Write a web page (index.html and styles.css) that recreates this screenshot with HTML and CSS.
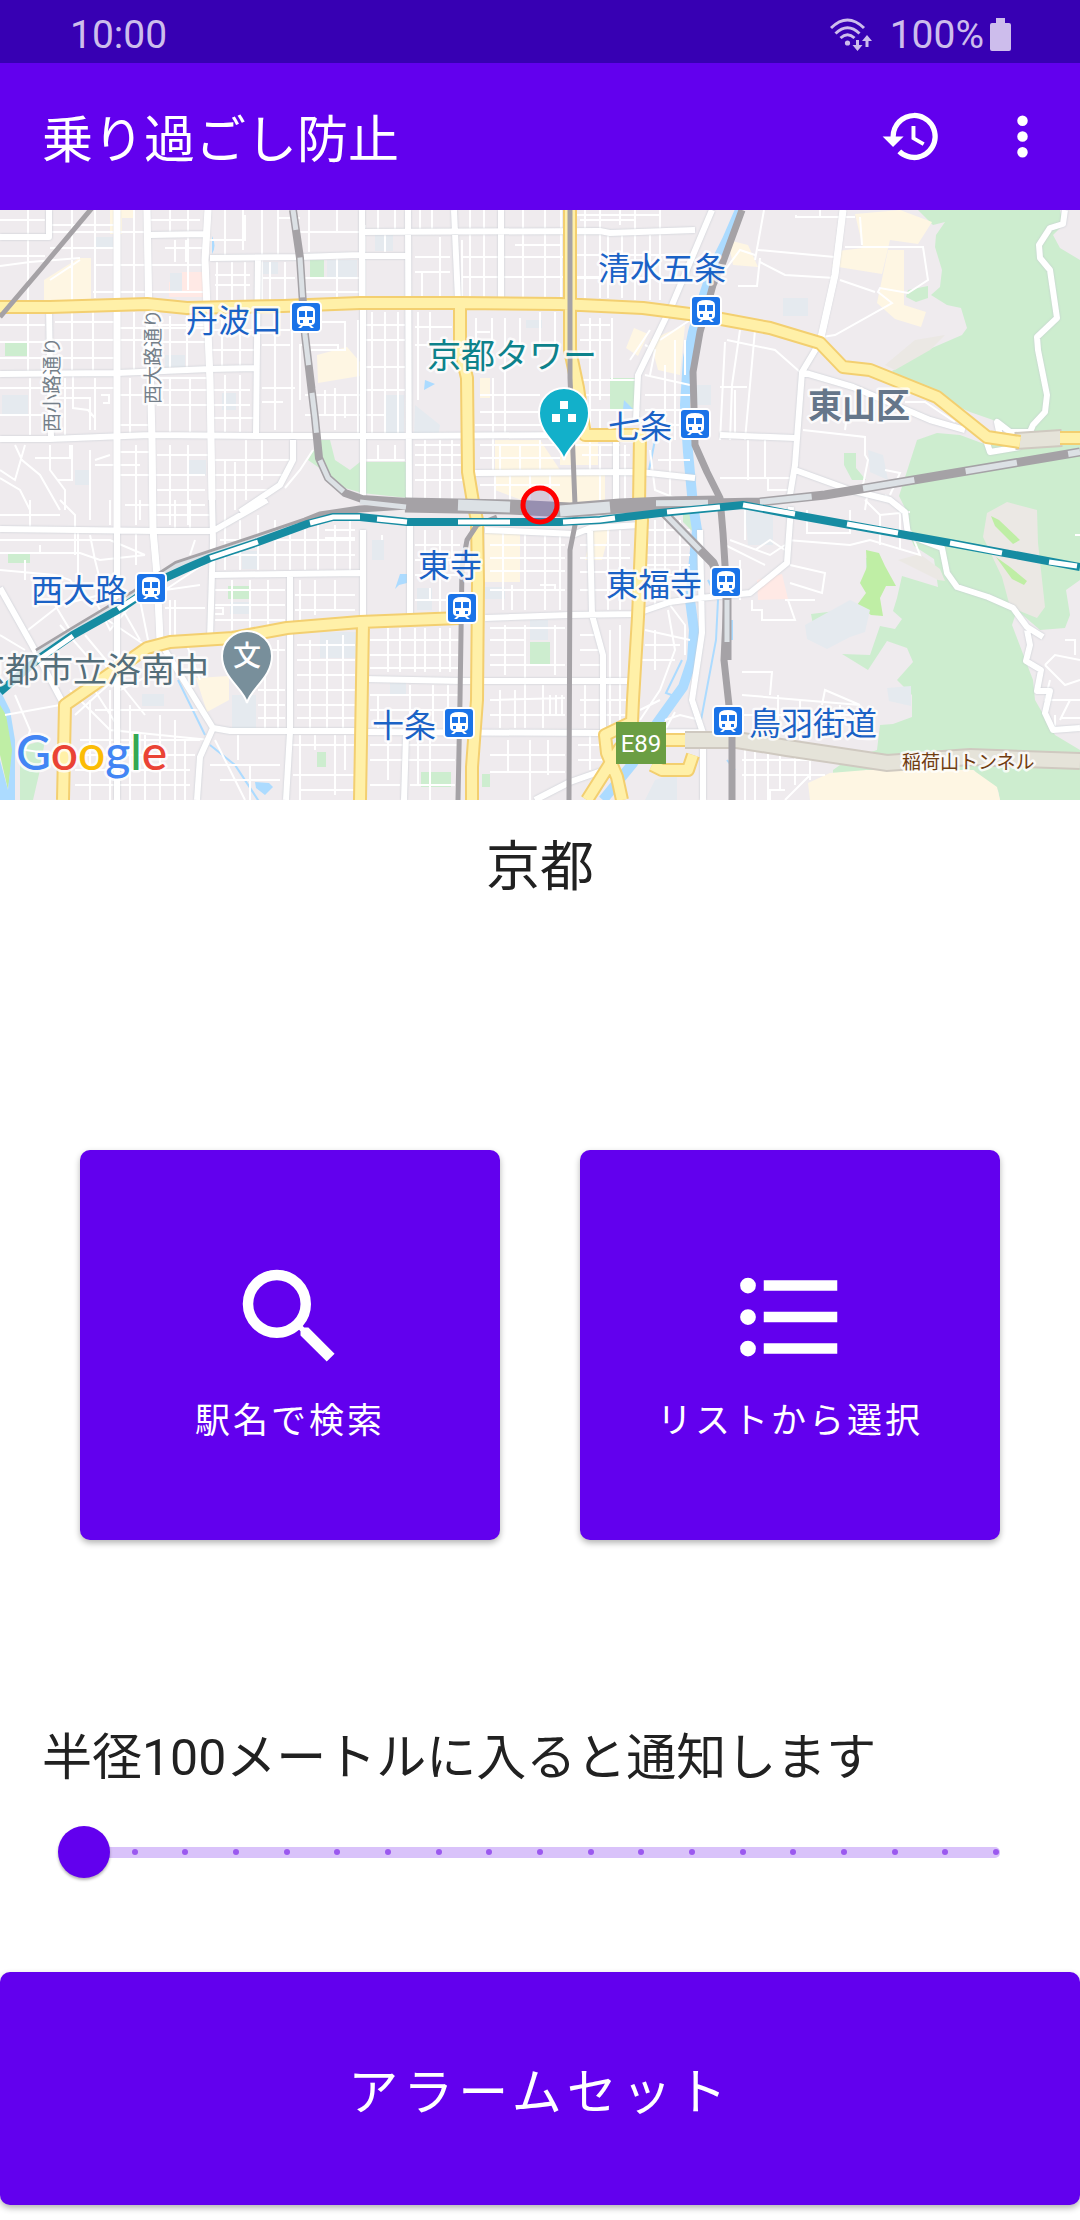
FILE: index.html
```html
<!DOCTYPE html>
<html lang="ja">
<head>
<meta charset="utf-8">
<meta name="viewport" content="width=device-width, initial-scale=1">
<title>乗り過ごし防止</title>
<link rel="stylesheet" href="styles.css">
</head>
<body>
<div class="status-bar">
  <span>10:00</span>
  <div class="status-right">
    <svg class="wifi" viewBox="0 0 42 34" aria-hidden="true">
      <g fill="none" stroke="currentColor" stroke-width="3">
        <path d="M1 10Q17.500 -6 34 10"/>
        <path d="M5.500 15.500Q17.500 4 29.500 15.500"/>
        <path d="M10.500 20Q17.500 13.500 24.500 20"/>
        <path d="M27.500 22V30M37 20V29"/>
      </g>
      <circle cx="17.500" cy="25" r="2.600" fill="currentColor"/>
      <path fill="currentColor" d="M22.500 27h10l-5 6zM32 23h10l-5-6z"/>
    </svg>
    <span>100%</span>
    <svg class="battery" viewBox="0 0 21 33" aria-hidden="true"><path fill="currentColor" d="M6 0h9v5h4a2 2 0 0 1 2 2v24a2 2 0 0 1-2 2H2a2 2 0 0 1-2-2V7a2 2 0 0 1 2-2h4z"/></svg>
  </div>
</div>

<header class="app-bar">
  <h1>乗り過ごし防止</h1>
  <button class="icon-button" type="button" aria-label="履歴">
    <svg viewBox="0 0 24 24"><path fill="currentColor" d="M13 3a9 9 0 0 0-9 9H1l3.890 3.890.070.140L9 12H6a7 7 0 1 1 2.060 4.940l-1.420 1.420A9 9 0 1 0 13 3zm-1 5v5l4.280 2.540.720-1.210-3.500-2.080V8z"/></svg>
  </button>
  <button class="icon-button" type="button" aria-label="その他">
    <svg viewBox="0 0 24 24"><path fill="currentColor" d="M12 8a2 2 0 1 0 0-4 2 2 0 0 0 0 4zm0 2a2 2 0 1 0 0 4 2 2 0 0 0 0-4zm0 6a2 2 0 1 0 0 4 2 2 0 0 0 0-4z"/></svg>
  </button>
</header>

<svg class="map" viewBox="0 210 1080 590" preserveAspectRatio="xMidYMid slice" role="img" aria-label="京都駅周辺の地図">
  <defs>
    <g id="station">
      <rect x="-15" y="-15" width="30" height="30" rx="4" fill="#1a73e8" stroke="#fff" stroke-width="2"/>
      <path fill="#fff" d="M-9 -6q0-5 9-5t9 5V4q0 4-4 4l3 3H5L3 9h-6l-2 2h-3l3-3q-4 0-4-4z"/>
      <path fill="#1a73e8" d="M-7-6h6v6h-6zM1-6h6v6H1zM-6 3h3v3h-3zM3 3h3v3H3z"/>
    </g>
    <path id="pin" d="M0 47C-3 33-25 22-25 0a25 25 0 0 1 50 0C25 22 3 33 0 47z"/>
  </defs>
  <rect y="210" width="1080" height="590" fill="#efebee"/>

  <!-- parks and hills -->
  <g fill="#cdedcf">
    <path d="M918 210l15 15 12-3-9 13-1 12 7 23-2 17-9 8 16 10 14 3 6 20-5 7-30 13-40 23 15 16 26 8 37 17 23 8 17 12h70V260l-20-12-7-13 10-10-3-15z"/>
    <path d="M917 440l20-7 23 2 27 10h93v135l-14 10 4 25-5 13-25 2-23-20-5 15 21 55 2 20 20 35 25 15v50h-80l-2-10-13-5-11-15H865l-10 15-22-2v-13l14-10 30-10 3-25 13-1 19-7v-22l-15-15 16-18-6-14-20-7-19 29-26-16 28 1 10-29 15 3 7-10-9-8 4-13 5-22 36 11-4-28-20-13-7-18 2-12-10-20z"/>
    <path d="M5 342h22v14H5zM310 260h14v18h-14zM610 378h27v33h-27zM530 642h20v24h-20zM421 772h30v15h-30zM482 774h8v13h-8zM8 554h22v9H8zM228 586h21v13h-21zM317 752h9v15h-9zM844 453h12v15l10 12h-14l-8-15z"/>
    <path d="M320 440h10l5 20 15 10 10-8h47v36l-45-5-17-5-20-16-17-12zM20 747l25-7-5 30-7 30H20zM908 290l20-4v12l-12 4-10-5zM811 614l25-3 9 8v7l-18-3-14 2zM866 558l12-4 6 20-18 4z"/>
    <path d="M683 512h10v20l-10-10z"/>
  </g>
  <g fill="#ebe8e4">
    <path d="M987 513l20-11 30 8 1 33 7 64-8 11-27-11-8-30-19-40zM895 370l35-20 15-15-30 5-30 25zM898 560l40 20 7 1-5-12-20-15z"/>
  </g>
  <path fill="#bfeea5" d="M866 550l13 3 6 13 11 20-10 0-6 12 3 18-12-1-14-10 9-12-6-10 7-16zM991 516l8 4 21 20-7 4-18-18zM996 557l14 10 17 14-3 4-12-6zM0 700l8 20 5 30-5 40-8-35z"/>
  <g fill="#fef6e3">
    <path d="M808 783l22-10 37-3h106l24 17 3 13H810zM110 210h24v8h-12v16h-12zM44 280l35-22h12v42H44zM855 214l45-4 32 12-14 22-28-4-8 34-50-8 6-15 25-3zM888 250h16v55l22 7-5 15-26-8-18-16zM317 355l30-8 13 15v14l-42 7zM495 440h45l20 30h45v35h-70l-40-15zM485 530h35v52h-35zM560 440h38v25h-38zM592 530h18l-8 30h-17zM634 328l14 6-10 22-12-8zM650 340l35-15-5 50-22-5zM480 378h10v20h-10zM196 678l33-2v24l-22 12zM728 240l20 5 10 22-25-2z"/>
  </g>
  <path fill="#ffe9e5" d="M182 272h22v25h-35v-15h13zM757 580l25-6 6 25-30 1z"/>
  <path fill="#e5eaef" d="M170 273h12v18h-12zM96 237h17v10H96zM327 260h30v18h-30zM262 262h16v12h-16zM2 395h26v20H2zM165 355h20v12h-20zM222 393h14v17h-14zM188 460h18v15h-18zM75 470h15v15H75zM375 235h18v16h-18zM386 395h18v40h-18zM415 405l25 20-2 12h-24zM526 320h16v8h-16zM695 385h16v20h-16zM783 298h25v18h-25zM745 510h28v35h-25zM805 625l45-25 20 10-5 22-15 5-23 12-20-10zM887 688l24-2v20l-22-5zM372 540h12v20h-12zM417 588h15v22h-15zM485 587h20v12h-20zM530 620h18v20h-18zM390 683h16v12h-16zM242 551h15v18h-15zM230 602h20v12h-20zM320 632h40v26h-40zM142 694h22v12h-22zM232 695h24v33h-24zM868 450l15 5 5 25-18-8zM655 780l22-7v27h-32z"/>

  <!-- water -->
  <path class="river" d="M740 210L727 240L713 268L704 295L693 332L688 358L685 405L688 452L693 505L697 530L690 600L694 630L692 660L683 687L657 723L633 763L603 800"/>
  <path fill="#acdbff" d="M0 690l10 20 5 30v60H0v-40l8 30 4-40-6-35-6-10zM212 236q5 10 0 18zM425 380l10 4-11 6zM624 400l9 9h-10zM400 574h7v9l-8 2-4 4zM255 782l14 1 4 4-8 8-9-7z"/>
  <path fill="none" stroke="#acdbff" stroke-width="2" d="M682 660l-16 33 8 3M210 745l25 20 25 38M655 440l-6 30M708 580l10 20-2 40-15 80M178 680l27 55M732 620v20M727 760l8 10"/>

  <!-- side streets -->
  <path class="lane" d="M28 210V300M72 210V300M95 210V298M134 210V300M170 210V235M188 210V290M225 210V255M243 210V250M262 210V300M278 210V255M309 210V252M337 210V232M0 220H45M50 225H115M50 248H115M0 256H45M0 266L30 262L80 258M50 280L80 260M93 292H205M50 232H150M95 265H205M150 220H200M165 248H205M175 240V262M186 240V262M217 262V300M232 262V300M245 262V300M270 262V300M285 262V300M215 275H250M215 285H250M262 278H295M208 240H245V215M278 218H300M300 232H360M305 278H360M305 292H360M337 258V300"/>
  <path class="lane" d="M28 312V372M72 312V370M93 312V372M134 312V370M170 316V368M187 316V368M222 316V368M240 316V368M275 312V430M292 330V435M0 325H45M55 322H115M55 340H145M0 342H45M120 328H205M0 358H115M155 342H205M212 330H290M212 350H255M158 325H205M262 345H290M262 388H295M0 388H115M30 378V435M65 378V435M95 378V430M130 378V435M170 378V432M190 378V432M225 375V432M240 375V432M120 395H150M157 390H250M157 405H250M212 418H255M55 398H90V430M120 425H150M0 415H45M73 375V408L88 410L95 418M101 395l8 0 0 8-6 0M155 378H210M262 402H283M315 388V430M335 388V430M305 395H360M325 390V415M305 415H360M345 395V418M338 350V345H300V400M358 320V435M305 322H345V350H308"/>
  <path class="lane" d="M25 445L15 480L0 470M15 445L22 460L40 475L60 510M35 458H70V445M50 445V470L65 490V510M0 478L20 490L30 510M72 445V480H58M120 452H150M157 455H208M120 475H205M157 490H205M90 520V450M136 445V525M170 445V525M188 445V525M215 460H290M215 475H285M215 490H270M225 460V520M235 462V510M246 440V500M262 440V480M313 450L300 470L285 488M95 460L110 455M95 465H140M125 505H205"/>
  <path class="lane" d="M365 225V300M378 210V230M395 210V230M420 210V230M432 210V230M440 237V298M470 210V298M484 210V298M523 210V298M545 210V298M561 210V298M585 210V298M600 210V298M608 235V298M622 235V298M635 210V300M650 235V300M660 210V300M415 257H450M462 257H565M462 277H600M415 272H450M422 272V298M515 245H560M575 255H665M575 278H680M575 215H660M620 210V225M580 220H635M462 240V298M385 235V252"/>
  <path class="lane" d="M372 312V435M385 312V435M398 312V435M418 312V400M430 312V345M365 325H405M365 340H405M365 367H405M365 390H405M365 415H385M415 327H452M415 345H452M476 318V350M492 318V350M505 318V435M520 318V350M475 332H490M540 312V350M555 312V350M590 318V470M600 318V400M612 318V380M580 325H610M580 340H612M580 380H635M585 395H610M480 395H540M480 412H540M475 425H555M493 378V470M585 410H640M600 410V430M480 445H620M480 458H560M500 445V470M520 445V470M540 440V470M600 445V505M625 445V505M582 455H630M415 445H460M415 455H462M415 465H462M415 480H465M425 440V505M440 440V505M452 440V500M363 460H405M378 445V460M395 445V460M480 485H560M495 475V500M510 475V500M530 475V500M550 475V500"/>
  <path class="lane" d="M650 330L630 360M645 345L655 350L650 375M660 340L690 320M645 375L690 385M665 365V440M675 340V440M685 340V375M645 395H690M645 410H690M645 425H690M650 450L655 490L680 500M658 460H690M670 440V500M725 270L740 250L755 255M755 260L764 210M738 286H757L760 258M758 250L835 257M760 262L785 275L835 278M796 215V217H855M860 217L862 245M820 210V217M845 247H923L928 280L908 293L880 288L878 292L892 303L835 335L822 337M840 280L875 292M727 340L775 350L800 372M740 330L732 385L730 440M755 330L750 385L745 440M720 387H747M725 342L720 440M735 390V435M748 440V480M765 440V478M720 478H790M768 478V490H790M803 430L865 437V455L868 460L863 485M850 395L845 430M905 402H925L955 422M885 470L900 473L890 495M868 490L865 510M885 495L900 505"/>
  <path class="lane" d="M0 515H60M30 500V530M60 500L75 515V555M78 530V580M90 535L95 560L100 580M118 530V570M136 530V565M0 540H110L145 555M0 553H80L100 560L145 555M40 553V545M0 570L55 575M25 560V580M55 575L70 580L85 600M28 630L60 605L100 595M55 605L70 630M95 600L110 630L135 600M120 605L140 640M140 600L148 640M165 590L210 560M165 590L200 585M170 600V640M175 600V635M165 608H205M195 540L190 555M170 515H205M175 500V530M190 500V530M110 500V525M140 500V520M155 515H210M0 635L25 650M100 615L145 645M85 635L110 665M60 625L95 665"/>
  <path class="lane" d="M70 690L110 730L210 740M85 675L120 730M105 665L145 715M95 710H200M75 715L130 665M80 740H200M75 755H195M75 770H190M75 785H190M90 700V800M110 690V800M130 705V800M145 735V800M160 715V800M175 720V800M185 740V800M120 690L160 670M15 695L30 730L25 750L60 755M5 715L60 705M215 740L245 800M238 735V760M250 765V800M210 765H280M220 780H280M290 745H355M300 735V800M315 735V750M335 735V795M293 775H360M345 735V770M300 790H355"/>
  <path class="lane" d="M225 505V570M240 520V570M258 515V570M275 520V570M290 530V570M305 520V570M318 525V570M335 525V570M350 520V570M220 540H355M220 555H355M325 530H355M325 538H355M215 590H285M215 605H285M215 620H285M232 580V630M250 580V630M268 580V625M300 580V620M315 580V615M335 580V610M295 595H355M295 610H355M215 608H223V614H215M297 645H355M297 660H355M297 675H355M297 690H355M297 705H355M297 718H355M310 640V728M327 640V728M343 635V728M265 640V728M278 640V728M240 650H285M258 690H285M258 705H285M258 718H285M225 640V660M185 640L200 680"/>
  <path class="lane" d="M382 535V540M425 530V570M440 530V615M452 530V560M415 545H460M415 560H455M415 575H460M415 600H460M430 588V600M370 640H460M370 655H460M370 668H460M370 695H460M370 710H460M388 628V672M400 628V672M415 628V672M425 628V672M440 628V672M450 628V672M410 685V728M433 685V728M448 685V728M370 745H460M370 760H455M370 785H400M410 785H455M388 738V780M405 738V740M418 738V785M430 738V800M370 680H460M378 695V728"/>
  <path class="lane" d="M503 530V610M525 530V610M545 530V610M560 535V610M490 545H565M490 558H565M490 571H565M490 590H565M512 585V610M540 585H555V590M490 628H565M490 640H525M490 655H525M490 665H565M505 625V675M525 625V728M555 625V675M490 700L565 698M490 715H565M500 690V728M515 690V728M543 685V728M550 695V715M556 695V715M562 695V715M490 755H565M490 772H565M508 740V772M530 740V800M548 740V775M580 545H630M580 558H630M580 572H630M580 590H630M608 530V610M620 530V610M580 635H600M580 650H600M580 665H600M580 700H628M580 715H628M585 685V728M610 630V728M620 625V728M578 745H605M578 760H605M590 735V770"/>
  <path class="lane" d="M645 530H690M645 545H690M645 555H690M645 565H690M650 575H690M655 520V610M665 515V575M680 520V575M645 630L690 640M645 645H680M640 660H675M655 630V670M668 610L675 650L660 690L640 720M670 605L685 625V655M640 710L660 700M730 540L770 555L785 545M745 500V540M725 545L765 565M740 560V600M755 550L770 540L785 550M787 540L850 545L870 540L920 555L910 530M807 510V533H850V510M865 500L880 515L910 512M880 515V545M900 510V550M790 565L825 573L822 593L790 583M785 600L815 600M752 600V610H762V620H795L788 600M742 672H772L770 695M742 695L860 705M778 695V740M800 700V740M822 705L825 690L860 705M840 705V740M742 715H860M742 760H830M742 775H825M745 745V800M755 745V800M768 750V800M780 752V790M795 755V785M810 757V780M770 800V790H785M785 800L810 775M675 712L665 730M665 720L680 715L700 720M1045 665L1055 655L1080 660M1045 665L1065 685L1080 680M1050 680L1045 700H1080M1065 640H1075V655M1060 720L1070 700M1062 718H1080M1055 715V730M1080 535L1075 535"/>

  <!-- main streets -->
  <path class="street" d="M117 210V800M147 210L149 320L152 440L153 530L157 575L160 640M208 210L205 260L210 380L212 500L213 540L210 638M258 258L256 434M49 305L51 440M0 237H49V210M150 235L205 234M210 258L300 257L360 255M0 374L117 373L210 369L257 368M0 439H50L150 435L260 436L400 436L580 435M0 529L155 531H213L267 500M213 575L360 573M293 440V460L280 485L240 512M408 210L409 505M454 210L458 300M501 210V300M362 210V300M360 232L600 231L610 233L695 230M360 256H408M712 210L672 305L638 375L636 420M475 473L640 472L695 478M616 440V505M410 525V618M363 530V620M485 530L575 534L590 528L640 525M485 618L570 615L635 614L670 602L700 598L750 593L787 563L791 507M365 679L460 681H633M365 732L600 733L700 732M590 527L592 615L603 655L603 730M406 735L404 800M535 800L570 782L610 768M700 530L702 633L692 700L703 733V800M0 588L32 645L63 703M290 575L290 732L286 800M160 640L165 650L213 728L200 757L197 800M213 728L230 731H358M843 210L835 275L820 342L802 372L795 465L790 495M802 372L853 387L930 420L965 430M720 435L795 438M795 470L850 490L890 500L905 512L908 535L942 548L947 573L957 587L988 597L1013 608L1027 627L1043 637M1027 630L1030 645L1026 661L1041 670L1037 691H1050L1045 713L1053 730L1080 728M1065 210L1063 224L1050 228L1039 245L1040 258L1050 270L1057 318L1037 337L1038 350L1047 395L1045 412L1033 425L1030 432H1010L997 422L1000 436M986 440L990 452L1020 447M363 300V500"/>
  <path class="street-fill" d="M147 210L149 320L152 440L153 530L157 575L160 640M117 210V530M208 210L205 260L210 380L212 500M843 210L835 275L820 342"/>

  <!-- tunnel -->
  <path fill="none" stroke="#cfc9c0" stroke-width="18" d="M685 740H737L787 748L887 763L970 757L1080 761M1015 441L1062 438"/>
  <path fill="none" stroke="#e5e3d9" stroke-width="14" d="M685 740H737L787 748L887 763L970 757L1080 761M1015 441L1062 438"/>

  <!-- arterial roads -->
  <path class="road-edge" d="M0 307H50L147 304L187 308L283 306L360 303H460L560 304L643 308L705 316L770 328L820 343L843 367L870 370L937 397L987 437L1020 442M1060 438H1080M460 308V348L467 378L468 472L473 502L477 520L478 583L477 700L472 767V800M570 210V350L578 388L585 435H640L639 505L642 520L638 617L633 700L632 722L605 735L607 753L617 777L622 800M63 800L65 705L147 648L170 642L233 638L287 628L360 622L460 618M363 623L360 800M587 800L620 748L640 740H685M652 765L662 770H688L693 755"/>
  <path class="road" d="M0 307H50L147 304L187 308L283 306L360 303H460L560 304L643 308L705 316L770 328L820 343L843 367L870 370L937 397L987 437L1020 442M1060 438H1080M460 308V348L467 378L468 472L473 502L477 520L478 583L477 700L472 767V800M570 210V350L578 388L585 435H640L639 505L642 520L638 617L633 700L632 722L605 735L607 753L617 777L622 800M63 800L65 705L147 648L170 642L233 638L287 628L360 622L460 618M363 623L360 800M587 800L620 748L640 740H685M652 765L662 770H688L693 755"/>

  <!-- railways -->
  <g class="rail">
    <path d="M92 208L40 270L0 317M570 210V378L575 505V525L570 550L569 800M497 517L477 525L467 540L462 567L460 700L458 800"/>
    <path stroke-width="7" d="M742 210L723 262L713 285L700 332L693 372L695 445L707 472L720 498L723 533L727 597L724 660L732 733V800"/>
    <path stroke-width="8" d="M293 210L300 258L305 335L315 418L319 458L328 478L345 493L362 499L407 502"/>
    <path stroke-width="7" d="M37 652L73 630L133 594L160 575L177 564L207 554L255 538L305 521L320 515L360 509L407 506"/>
    <path stroke-width="15" d="M405 505L510 507L570 510L620 506L665 504L720 503"/>
    <path stroke-width="9" d="M660 504L760 502L825 495L943 475L1080 452M663 512L713 563L727 597V660"/>
  </g>
  <g class="rail-gap">
    <path stroke-dasharray="40 28" stroke-dashoffset="-48" d="M293 210L300 258L305 335L315 418L319 458L328 478L345 493L362 499"/>
    <path d="M37 654L73 632L133 596L160 577L177 566L207 556L255 540L300 525M360 502L406 507M663 512L700 550M727 600V642"/>
    <path stroke-width="11" d="M458 505L510 507M560 511L610 507"/>
    <path stroke-dasharray="52 52" stroke-dashoffset="52" stroke-width="6" d="M604 504L760 502L825 495L943 475L1080 452"/>
  </g>
  <path fill="none" stroke="#168ca2" stroke-width="8" d="M0 692L37 660L73 635L123 607L167 577L187 568L210 558L258 542L307 524L333 517L360 517L407 522H560L600 520L660 513L743 505L795 515L950 543L1080 567"/>
  <path fill="none" stroke="#fff" stroke-width="5" d="M37 661L73 636M118 609L140 595M210 558L258 542M310 523L333 517H360M377 519L407 522M458 522H510M563 522L600 520L615 518M667 512L720 507M743 505L795 514M847 524L898 533M950 543L1002 553M1049 562L1077 566"/>
  <circle cx="540" cy="505" r="17" fill="#7664c8" fill-opacity=".3" stroke="#f00" stroke-width="5"/>

  <!-- pins and badges -->
  <use href="#pin" x="564" y="413" fill="#12b0ca" stroke="#fff" stroke-width="2"/>
  <path fill="#fff" d="M560 401h8v8h-8zM552 414h8v8h-8zM568 414h8v8h-8z"/>
  <use href="#pin" x="247" y="656" fill="#788f9b" stroke="#fff" stroke-width="2"/>
  <rect x="616" y="722" width="50" height="42" fill="#6b9e43"/>
  <use href="#station" x="306" y="317"/>
  <use href="#station" x="706" y="311"/>
  <use href="#station" x="695" y="424"/>
  <use href="#station" x="151" y="588"/>
  <use href="#station" x="462" y="608"/>
  <use href="#station" x="726" y="582"/>
  <use href="#station" x="459" y="723"/>
  <use href="#station" x="728" y="721"/>

  <!-- place names -->
  <g class="label station-name">
    <text x="186" y="332">丹波口</text>
    <text x="598" y="280">清水五条</text>
    <text x="608" y="438">七条</text>
    <text x="31" y="602">西大路</text>
    <text x="418" y="577">東寺</text>
    <text x="606" y="596">東福寺</text>
    <text x="372" y="737">十条</text>
    <text x="749" y="735">鳥羽街道</text>
  </g>
  <g class="label place-name">
    <text x="427" y="368" fill="#0d828b">京都タワー</text>
    <text x="808" y="418" fill="#65768a" font-weight="700">東山区</text>
    <text x="209" y="682" fill="#546e7a" text-anchor="end">京都市立洛南中</text>
  </g>
  <g class="label road-name">
    <text transform="translate(59 432) rotate(-90)">西小路通り</text>
    <text transform="translate(160 404) rotate(-90)">西大路通り</text>
    <text x="902" y="769" fill="#703c10">稲荷山トンネル</text>
  </g>
  <text class="pin-text" x="247" y="666" text-anchor="middle">文</text>
  <text class="badge-text" x="641" y="752" text-anchor="middle">E89</text>
  <text class="label logo" x="16" y="770"><tspan fill="#4285f4">G</tspan><tspan fill="#ea4335">o</tspan><tspan fill="#fbbc05">o</tspan><tspan fill="#4285f4">g</tspan><tspan fill="#34a853">l</tspan><tspan fill="#ea4335">e</tspan></text>
</svg>

<main>
  <h2 class="station-title">京都</h2>
  <div class="choices">
    <button class="choice" type="button">
      <svg viewBox="0 0 24 24" aria-hidden="true"><path fill="currentColor" d="M15.500 14h-.790l-.280-.270A6.471 6.471 0 0 0 16 9.500 6.500 6.500 0 1 0 9.500 16c1.610 0 3.090-.590 4.230-1.570l.270.280v.790l5 4.990L20.490 19l-4.990-5zm-6 0a4.500 4.500 0 1 1 0-9 4.500 4.500 0 0 1 0 9z"/></svg>
      <span>駅名で検索</span>
    </button>
    <button class="choice" type="button">
      <svg viewBox="0 0 24 24" aria-hidden="true"><path fill="currentColor" d="M4 10.500a1.500 1.500 0 1 0 0 3 1.500 1.500 0 0 0 0-3zm0-6a1.500 1.500 0 1 0 0 3 1.500 1.500 0 0 0 0-3zm0 12a1.500 1.500 0 1 0 0 3 1.500 1.500 0 0 0 0-3zM7 19h14v-2H7v2zm0-6h14v-2H7v2zm0-8v2h14V5H7z"/></svg>
      <span>リストから選択</span>
    </button>
  </div>
  <label class="radius-label" for="radius">半径100メートルに入ると通知します</label>
  <div class="slider">
    <div class="track" aria-hidden="true"><i></i><i></i><i></i><i></i><i></i><i></i><i></i><i></i><i></i><i></i><i></i><i></i><i></i><i></i><i></i><i></i><i></i><i></i><i></i></div>
    <input id="radius" type="range" min="100" max="1000" step="50" value="100">
  </div>
  <button class="set-alarm" type="button">アラームセット</button>
</main>
</body>
</html>
```
FILE: styles.css
```css
* {
  box-sizing: border-box;
}

body {
  margin: 0;
  background: #fff;
  color: #212121;
  font-family: Roboto, "Noto Sans CJK JP", sans-serif;
  font-weight: 400;
}

h1,
h2 {
  margin: 0;
  font-weight: 400;
}

button {
  border: 0;
  padding: 0;
  background: #6200ee;
  color: #fff;
  font: inherit;
}

svg {
  display: block;
}

.status-bar {
  display: flex;
  align-items: center;
  justify-content: space-between;
  height: 63px;
  padding: 6px 69px 0 70px;
  background: #3700b3;
  color: #cdbdec;
  font-size: 39px;
}

.status-right {
  display: flex;
  align-items: center;
  gap: 6px;
}

.wifi {
  width: 42px;
  height: 34px;
  margin-right: 12px;
}

.battery {
  width: 21px;
  height: 33px;
}

.app-bar {
  display: flex;
  align-items: center;
  gap: 48px;
  height: 147px;
  padding: 0 26px 0 42px;
  background: #6200ee;
  color: #fff;
}

.app-bar h1 {
  flex: 1;
  padding-top: 8px;
  font-size: 51px;
  line-height: 72px;
}

.icon-button {
  width: 63px;
  height: 63px;
}

.icon-button svg {
  width: 100%;
  height: 100%;
}

.map {
  width: 100%;
  height: 590px;
}

.river {
  fill: none;
  stroke: #acdbff;
  stroke-width: 10px;
}

.lane {
  fill: none;
  stroke: #fff;
  stroke-width: 2px;
}

.street {
  fill: none;
  stroke: #fff;
  stroke-width: 6px;
  stroke-linejoin: round;
  filter: drop-shadow(0 0 1px #c3c9d0);
}

.street-fill {
  fill: none;
  stroke: #fff;
  stroke-width: 7px;
}

.road-edge,
.road {
  fill: none;
  stroke: #f3cf70;
  stroke-width: 14px;
  stroke-linejoin: round;
}

.road {
  stroke: #fff0a8;
  stroke-width: 10px;
}

.rail {
  fill: none;
  stroke: #a5a2a6;
  stroke-width: 5px;
  stroke-linejoin: round;
}

.rail-gap {
  fill: none;
  stroke: #dce1e5;
  stroke-width: 5px;
}

.label {
  stroke: #fff;
  stroke-opacity: .8;
  stroke-width: 5px;
  stroke-linejoin: round;
  paint-order: stroke;
}

.station-name {
  fill: #1a62c6;
  font-size: 32px;
}

.place-name {
  font-size: 34px;
}

.road-name {
  fill: #75808a;
  font-size: 19px;
}

.logo {
  font-family: Lato, sans-serif;
  font-size: 48px;
  font-weight: 500;
}

.pin-text {
  fill: #fff;
  font-size: 28px;
  font-weight: 500;
}

.badge-text {
  fill: #fff;
  font-size: 24px;
}

.station-title {
  padding-top: 28px;
  font-size: 54px;
  line-height: 80px;
  text-align: center;
}

.choices {
  display: grid;
  grid-template-columns: 1fr 1fr;
  gap: 80px;
  margin-top: 242px;
  padding: 0 80px;
}

.choice {
  display: flex;
  flex-direction: column;
  align-items: center;
  gap: 18px;
  min-height: 390px;
  padding-top: 104px;
  border-radius: 10px;
  box-shadow: 0 3px 6px rgb(0 0 0 / 30%);
  font-size: 35px;
  line-height: 48px;
  letter-spacing: 3px;
}

.choice svg {
  width: 126px;
  height: 126px;
}

.radius-label {
  display: block;
  margin-top: 182px;
  padding-left: 42px;
  font-size: 50px;
  line-height: 72px;
}

.slider {
  display: grid;
  align-items: center;
  margin: 32px 58px 94px;
}

.track,
.slider input {
  grid-area: 1 / 1;
}

.track {
  display: flex;
  align-items: center;
  justify-content: space-between;
  height: 11px;
  margin: 0 22px;
  padding: 0 1px;
  border-radius: 5px;
  background: #d9c2fa;
}

.track i {
  width: 6px;
  height: 6px;
  border-radius: 50%;
  background: #9b59ef;
}

.slider input {
  width: 100%;
  height: 52px;
  margin: 0;
  background: transparent;
  appearance: none;
}

.slider input::-webkit-slider-thumb {
  width: 52px;
  height: 52px;
  border-radius: 50%;
  background: #6200ee;
  box-shadow: 0 2px 3px rgb(0 0 0 / 30%);
  appearance: none;
}

.set-alarm {
  display: block;
  width: 100%;
  min-height: 233px;
  margin-bottom: 15px;
  padding-top: 8px;
  border-radius: 10px;
  box-shadow: 0 3px 6px rgb(0 0 0 / 30%);
  font-size: 50px;
  line-height: 72px;
  letter-spacing: 5px;
}
```
